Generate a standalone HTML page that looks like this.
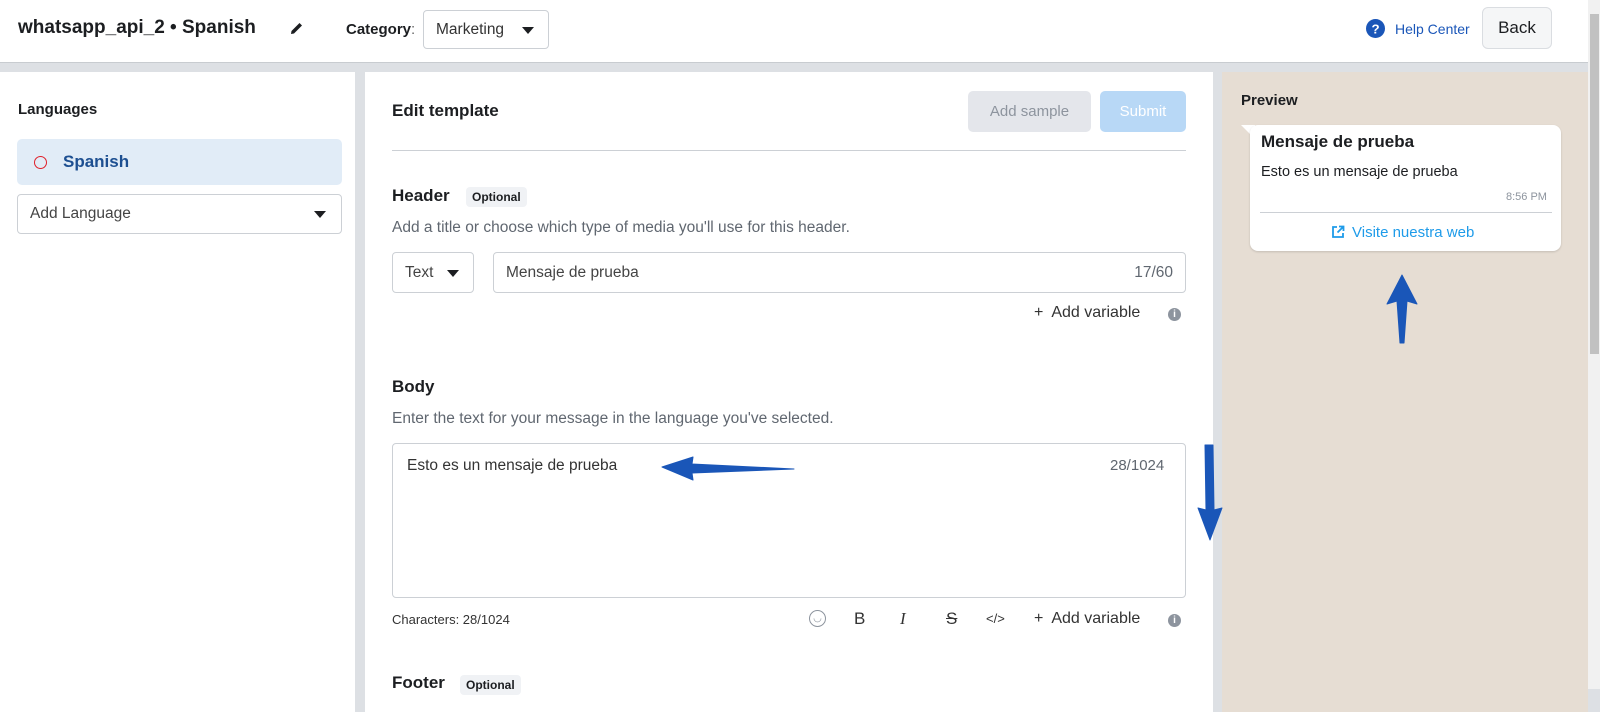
<!DOCTYPE html>
<html><head><meta charset="utf-8"><style>
*{box-sizing:border-box;margin:0;padding:0}
body{width:1600px;height:689px;overflow:hidden;background:#dde0e4;font-family:"Liberation Sans",sans-serif;color:#1c1e21;position:relative}
.a{position:absolute}
.top{left:0;top:0;width:1588px;height:63px;background:#fff;border-bottom:1px solid #c8ccd0}
.w{background:#fff}
.btn{border:1px solid #dadde1;border-radius:6px;background:#f5f6f7;font-size:16px;display:flex;align-items:center;justify-content:center}
.sel{border:1px solid #ccd0d5;border-radius:4px;background:#fff;font-size:15.5px;display:flex;align-items:center;padding:0 12px;color:#444}
.tri{width:0;height:0;border-left:6px solid transparent;border-right:6px solid transparent;border-top:7px solid #1c1e21;position:absolute}
.h{font-size:17px;font-weight:bold}
.d{font-size:15.5px;color:#606770}
.opt{font-size:12px;font-weight:bold;background:#f0f2f5;border-radius:4px;padding:3px 6px}
</style></head><body>
<div class="a top"></div>
<div class="a" style="left:18px;top:17px;font-size:19px;font-weight:bold">whatsapp_api_2 • Spanish</div>
<svg class="a" style="left:290px;top:21px" width="14" height="14" viewBox="0 0 14 14"><path d="M1 13 L1.5 10 L9.5 2 L12 4.5 L4 12.5 Z" fill="#1c1e21"/></svg>
<div class="a" style="left:346px;top:21px;font-size:15px;font-weight:bold;color:#1c1e21">Category<span style="font-weight:normal;color:#666">:</span></div>
<div class="a sel" style="left:423px;top:10px;width:126px;height:39px;color:#333">Marketing<div class="tri" style="left:98px;top:16px"></div></div>
<svg class="a" style="left:1366px;top:19px" width="19" height="19" viewBox="0 0 20 20"><circle cx="10" cy="10" r="10" fill="#1a56b8"/><text x="10" y="15" font-size="14" font-weight="bold" fill="#fff" text-anchor="middle" font-family="Liberation Sans">?</text></svg>
<div class="a" style="left:1395px;top:21px;font-size:14px;color:#1a56b8">Help Center</div>
<div class="a btn" style="left:1482px;top:7px;width:70px;height:42px;font-size:17px">Back</div>
<div class="a" style="left:1588px;top:0;width:12px;height:689px;background:#f1f1f1"></div>
<div class="a" style="left:1590px;top:14px;width:9px;height:340px;background:#c1c1c1"></div>

<div class="a w" style="left:0;top:72px;width:355px;height:640px"></div>
<div class="a" style="left:18px;top:101px;font-size:15px;font-weight:bold">Languages</div>
<div class="a" style="left:17px;top:139px;width:325px;height:46px;background:#e1ecf7;border-radius:5px"></div>
<div class="a" style="left:34px;top:156px;width:13px;height:13px;border:1.5px solid #e0202a;border-radius:50%"></div>
<div class="a" style="left:63px;top:152px;font-size:17px;font-weight:bold;color:#1d4f91">Spanish</div>
<div class="a sel" style="left:17px;top:194px;width:325px;height:40px">Add Language<div class="tri" style="left:296px;top:16px"></div></div>

<div class="a w" style="left:365px;top:72px;width:848px;height:640px"></div>
<div class="a" style="left:392px;top:101px;font-size:17px;font-weight:bold">Edit template</div>
<div class="a" style="left:968px;top:91px;width:123px;height:41px;background:#e4e6eb;border-radius:5px;color:#8d949e;font-size:15px;display:flex;align-items:center;justify-content:center">Add sample</div>
<div class="a" style="left:1100px;top:91px;width:86px;height:41px;background:#b8d8f6;border-radius:5px;color:#fff;font-size:15px;display:flex;align-items:center;justify-content:center">Submit</div>
<div class="a" style="left:392px;top:150px;width:794px;height:1px;background:#ccd0d5"></div>
<div class="a h" style="left:392px;top:186px">Header</div>
<div class="a opt" style="left:466px;top:187px">Optional</div>
<div class="a d" style="left:392px;top:219px">Add a title or choose which type of media you'll use for this header.</div>
<div class="a sel" style="left:392px;top:252px;width:82px;height:41px">Text<div class="tri" style="left:54px;top:17px"></div></div>
<div class="a sel" style="left:493px;top:252px;width:693px;height:41px">Mensaje de prueba<span style="position:absolute;right:12px;color:#606770">17/60</span></div>
<div class="a" style="left:1034px;top:304px;font-size:16px;color:#333">+&nbsp; Add variable</div>
<div class="a" style="left:1168px;top:308px;width:13px;height:13px;border-radius:50%;background:#8d949e;color:#fff;font-size:10px;font-weight:bold;text-align:center;line-height:13px">i</div>
<div class="a h" style="left:392px;top:377px">Body</div>
<div class="a d" style="left:392px;top:410px">Enter the text for your message in the language you've selected.</div>
<div class="a" style="left:392px;top:443px;width:794px;height:155px;border:1px solid #ccd0d5;border-radius:4px"></div>
<div class="a" style="left:407px;top:457px;font-size:15.5px;color:#333">Esto es un mensaje de prueba</div>
<div class="a" style="left:1110px;top:457px;font-size:15px;color:#606770">28/1024</div>
<div class="a" style="left:392px;top:612px;font-size:13px;color:#333">Characters: 28/1024</div>
<div class="a" style="left:809px;top:610px;width:17px;height:17px;border:1.3px solid #8d949e;border-radius:50%;font-size:10px;color:#8d949e;text-align:center;line-height:15px">◡</div>
<div class="a" style="left:854px;top:609px;font-size:17px;color:#333">B</div>
<div class="a" style="left:900px;top:609px;font-size:17px;font-style:italic;font-family:'Liberation Serif',serif;color:#333">I</div>
<div class="a" style="left:946px;top:609px;font-size:17px;text-decoration:line-through;color:#333">S</div>
<div class="a" style="left:986px;top:611px;font-size:13px;color:#333">&lt;/&gt;</div>
<div class="a" style="left:1034px;top:610px;font-size:16px;color:#333">+&nbsp; Add variable</div>
<div class="a" style="left:1168px;top:614px;width:13px;height:13px;border-radius:50%;background:#8d949e;color:#fff;font-size:10px;font-weight:bold;text-align:center;line-height:13px">i</div>
<div class="a h" style="left:392px;top:673px">Footer</div>
<div class="a opt" style="left:460px;top:675px">Optional</div>

<div class="a" style="left:1222px;top:72px;width:366px;height:640px;background:#e6ddd3"></div>
<div class="a" style="left:1241px;top:92px;font-size:15px;font-weight:bold">Preview</div>
<svg class="a" style="left:1241px;top:125px" width="14" height="14"><path d="M0 0 H14 V14 Z" fill="#fff"/></svg>
<div class="a" style="left:1250px;top:125px;width:311px;height:126px;background:#fff;border-radius:8px;box-shadow:0 1px 2px rgba(0,0,0,.15)"></div>
<div class="a" style="left:1261px;top:132px;font-size:17px;font-weight:bold">Mensaje de prueba</div>
<div class="a" style="left:1261px;top:164px;font-size:14.5px">Esto es un mensaje de prueba</div>
<div class="a" style="left:1506px;top:191px;font-size:11px;color:#8d949e">8:56 PM</div>
<div class="a" style="left:1260px;top:212px;width:292px;height:1px;background:#ccd0d5"></div>
<svg class="a" style="left:1331px;top:225px" width="14" height="14" viewBox="0 0 14 14"><path d="M6 2 H2 V12 H12 V8 M8 1.5 H12.5 V6 M12.5 1.5 L6.5 7.5" fill="none" stroke="#1e9be9" stroke-width="1.8"/></svg>
<div class="a" style="left:1352px;top:224px;font-size:15px;color:#1e9be9">Visite nuestra web</div>

<svg class="a" style="left:0;top:0" width="1600" height="689">
<g fill="#1a56b8" stroke="#1a56b8" stroke-width="1" stroke-linejoin="round">
<path d="M794 469 L692 464 L693 457 L662 467 L693 480 L692 473 Z"/>
<path d="M1205 445 L1213 445 L1214 510 L1222 508 L1210 540 L1198 508 L1206 510 Z"/>
<path d="M1400 343 L1404 343 L1407 301 L1417 304 L1402 275 L1387 304 L1397 301 Z"/>
</g></svg>
</body></html>
